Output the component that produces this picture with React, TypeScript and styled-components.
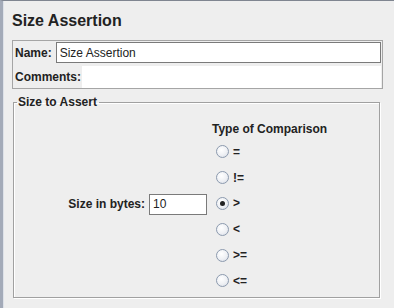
import React from "react";
import styled, { createGlobalStyle } from "styled-components";

const Global = createGlobalStyle`
  html, body { margin: 0; padding: 0; background: #eeeeee; }
  body { font-family: "Liberation Sans", Arial, sans-serif; }
`;

const Frame = styled.div`
  width: 394px;
  height: 308px;
  box-sizing: border-box;
  background: #eeeeee;
  border-top: 1px solid #7f8590;
  border-left: 3px solid #a3aab8;
  box-shadow: inset 1px 0 0 #dde1e8;
  display: flex;
  flex-direction: column;
  padding: 9px 11px 0 9px;
  overflow: hidden;
`;

const Title = styled.h1`
  margin: 0;
  font-size: 16px;
  line-height: 21px;
  font-weight: bold;
  color: #222;
`;

const NamePanel = styled.div`
  margin-top: 9px;
  border: 1px solid #a5a5a5;
  display: flex;
  flex-direction: column;
  padding: 1px 1px 0 1px;
  background: #eeeeee;
`;

const Row = styled.div<{ $white?: boolean }>`
  display: flex;
  align-items: center;
  height: ${(p) => (p.$white ? 22 : 21)}px;
  margin-top: ${(p) => (p.$white ? 3 : 0)}px;
`;

const Label = styled.span`
  font-size: 12px;
  font-weight: bold;
  color: #222;
  padding: 0 4px 0 1px;
  white-space: nowrap;
`;

const Filler = styled.div`
  flex: 1;
  align-self: stretch;
  background: #ffffff;
  margin-left: -3px;
`;

const TextInput = styled.input<{ $w?: number }>`
  box-sizing: border-box;
  height: 21px;
  ${(p) => (p.$w ? `width: ${p.$w}px;` : "flex: 1;")}
  border: 1px solid #7a7a7a;
  background: #ffffff;
  font-family: "Liberation Sans", Arial, sans-serif;
  font-size: 12px;
  color: #222;
  padding: 0 3px;
  outline: none;
`;

const Group = styled.fieldset`
  margin: 6px 0 0 1px;
  padding: 0;
  height: 203px;
  box-sizing: border-box;
  border: 1px solid #a0a0a0;
  box-shadow: 1px 1px 0 #ffffff, inset 1px 1px 0 #ffffff;
  display: flex;
  align-items: stretch;
  width: 367px;
`;

const Legend = styled.legend`
  font-size: 12px;
  font-weight: bold;
  color: #222;
  padding: 0 2px 0 1px;
  margin-left: 3px;
`;

const LeftCol = styled.div`
  width: 193px;
  display: flex;
  align-items: center;
  justify-content: flex-end;
  margin-top: 6px;
`;

const RightCol = styled.div`
  display: flex;
  flex-direction: column;
  padding-left: 5px;
  padding-top: 13px;
`;

const ColTitle = styled.div`
  font-size: 12px;
  font-weight: bold;
  color: #222;
  height: 17px;
  line-height: 14px;
`;

const Option = styled.label`
  display: flex;
  align-items: center;
  height: 25.8px;
  font-size: 12px;
  font-weight: bold;
  color: #222;
  gap: 4px;
  padding-left: 4px;
`;

const Radio = styled.span<{ $on?: boolean }>`
  width: 13px;
  height: 13px;
  box-sizing: border-box;
  border-radius: 50%;
  border: 1px solid #8c9aae;
  background: radial-gradient(circle at 40% 35%, #ffffff 0%, #eef0f4 55%, #d3d8e2 100%);
  display: flex;
  align-items: center;
  justify-content: center;
  &::after {
    content: "";
    width: 5px;
    height: 5px;
    border-radius: 50%;
    background: #222;
    display: ${(p) => (p.$on ? "block" : "none")};
  }
`;

const options = ["=", "!=", ">", "<", ">=", "<="];

export default function App() {
  return (
    <>
      <Global />
      <Frame>
        <Title>Size Assertion</Title>
        <NamePanel>
          <Row>
            <Label>Name:</Label>
            <TextInput defaultValue="Size Assertion" />
          </Row>
          <Row $white>
            <Label>Comments:</Label>
            <Filler />
          </Row>
        </NamePanel>
        <Group>
          <Legend>Size to Assert</Legend>
          <LeftCol>
            <Label>Size in bytes:</Label>
            <TextInput $w={58} defaultValue="10" />
          </LeftCol>
          <RightCol>
            <ColTitle>Type of Comparison</ColTitle>
            {options.map((o) => (
              <Option key={o}>
                <Radio $on={o === ">"} />
                {o}
              </Option>
            ))}
          </RightCol>
        </Group>
      </Frame>
    </>
  );
}
